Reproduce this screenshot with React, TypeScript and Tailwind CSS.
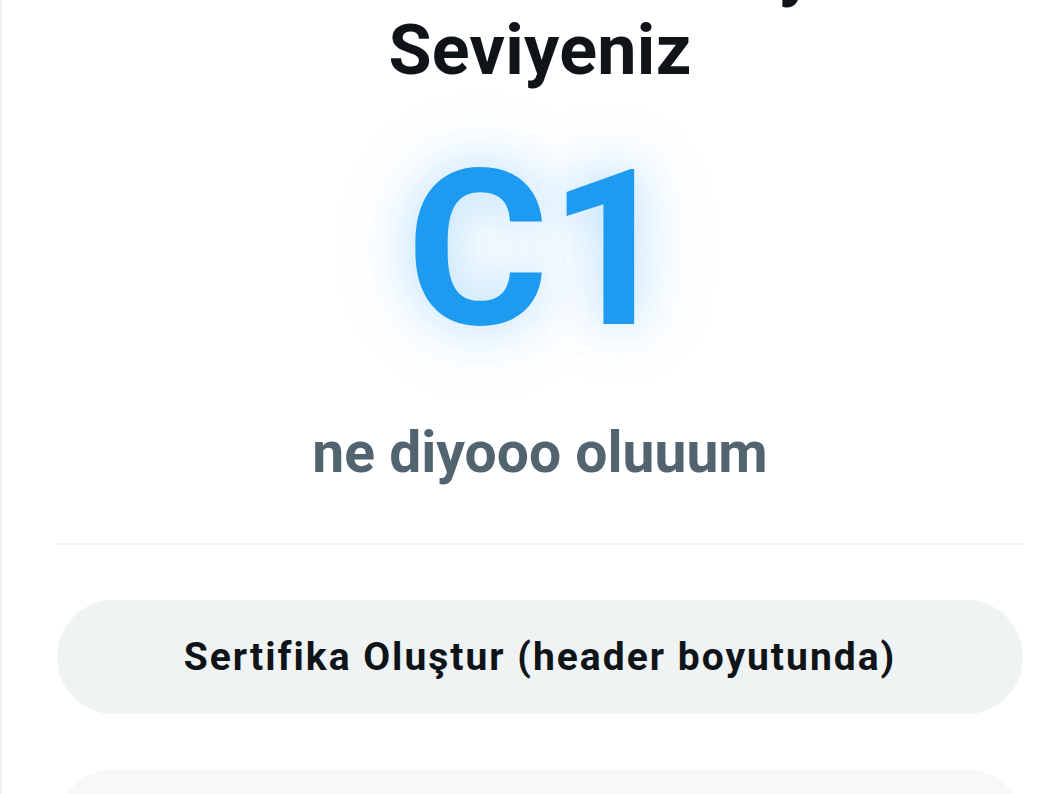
import React from "react";

export default function App() {
  return (
    <div
      className="h-[794px] w-full overflow-hidden bg-white border-l-2 border-[#eff3f4]"
      style={{ fontFamily: "Roboto, 'Noto Sans', sans-serif" }}
    >
      <div className="pl-[55px] pr-[38px] flex flex-col items-stretch">
        <h1 className="mt-[-71px] text-center font-bold text-[70px] leading-[81px] tracking-[0.3px] text-[#0f1419]">
          Tahmini Dil Düzeyi
          <br />
          Seviyeniz
        </h1>
        <div className="mt-[50px] text-center font-bold text-[218px] leading-none text-[#1d9bf0] [text-shadow:0_0_45px_rgba(29,155,240,0.28),0_0_90px_rgba(29,155,240,0.16)]">
          C1
        </div>
        <p className="mt-[60px] text-center font-bold text-[57px] leading-[1.2] text-[#536471]">
          ne diyooo oluuum
        </p>
        <div className="mt-[56px] h-[2px] bg-[#eff3f4]" />
        <button className="mt-[55px] h-[114px] w-full rounded-full bg-[#eff3f4] text-[39px] font-bold tracking-[2px] text-[#0f1419]">
          Sertifika Oluştur (header boyutunda)
        </button>
        <button className="mt-[55px] h-[114px] w-full rounded-full bg-[#f7f9f9] text-[39px] font-bold tracking-[2px] text-[#0f1419]">
          Paylaş
        </button>
      </div>
    </div>
  );
}
